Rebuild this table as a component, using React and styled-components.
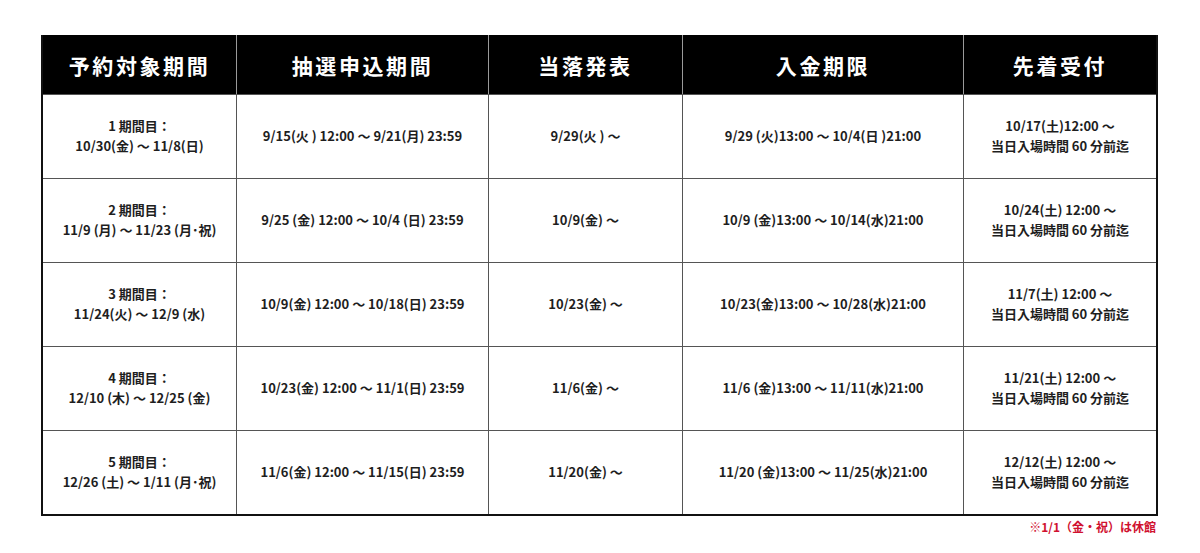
import React from "react"
import styled, { createGlobalStyle } from "styled-components"

const GlobalStyle = createGlobalStyle`
  html, body {
    margin: 0;
    padding: 0;
    background: #fff;
  }
  body {
    font-family: "Noto Sans CJK JP", "Noto Sans", sans-serif;
  }
`

const Page = styled.div`
  width: 1200px;
  height: 553px;
  padding: 35px 0 0 41px;
  box-sizing: border-box;
`

const Wrap = styled.div`
  width: 1117px;
`

const Table = styled.div`
  display: grid;
  grid-template-columns: 193px 252px 194px 281px 193px;
  grid-template-rows: 59px repeat(5, 84px);
  border: 2px solid #111;
  border-top: 0;
  box-sizing: border-box;
`

const HeadCell = styled.div`
  background: #000;
  color: #fff;
  font-size: 21px;
  font-weight: 700;
  letter-spacing: 2.6px;
  display: flex;
  align-items: center;
  justify-content: center;
  border-left: ${p => (p.$first ? "0" : "1px solid #9a9a9a")};
  box-sizing: border-box;
`

const Cell = styled.div`
  display: flex;
  flex-direction: column;
  align-items: center;
  justify-content: center;
  border-top: 1px solid #555;
  border-left: ${p => (p.$first ? "0" : "1px solid #555")};
  box-sizing: border-box;
  color: #1e1e1e;
  font-size: 13px;
  font-weight: 700;
  line-height: 20px;
  white-space: pre;
  padding-bottom: 2px;
`

const Note = styled.div`
  text-align: right;
  color: #d0112f;
  font-size: 12px;
  font-weight: 700;
  margin-top: 2px;
  padding-right: 2px;
`

const heads = ["予約対象期間", "抽選申込期間", "当落発表", "入金期限", "先着受付"]

const rows = [
  [
    ["1 期間目：", "10/30(金) 〜 11/8(日)"],
    ["9/15(火 ) 12:00 〜 9/21(月) 23:59"],
    ["9/29(火 ) 〜"],
    ["9/29 (火)13:00 〜 10/4(日 )21:00"],
    ["10/17(土)12:00 〜", "当日入場時間 60 分前迄"],
  ],
  [
    ["2 期間目：", "11/9 (月) 〜 11/23 (月･祝)"],
    ["9/25 (金) 12:00 〜 10/4 (日) 23:59"],
    ["10/9(金) 〜"],
    ["10/9 (金)13:00 〜 10/14(水)21:00"],
    ["10/24(土) 12:00 〜", "当日入場時間 60 分前迄"],
  ],
  [
    ["3 期間目：", "11/24(火) 〜 12/9 (水)"],
    ["10/9(金) 12:00 〜 10/18(日) 23:59"],
    ["10/23(金) 〜"],
    ["10/23(金)13:00 〜 10/28(水)21:00"],
    ["11/7(土) 12:00 〜", "当日入場時間 60 分前迄"],
  ],
  [
    ["4 期間目：", "12/10 (木) 〜 12/25 (金)"],
    ["10/23(金) 12:00 〜 11/1(日) 23:59"],
    ["11/6(金) 〜"],
    ["11/6 (金)13:00 〜 11/11(水)21:00"],
    ["11/21(土) 12:00 〜", "当日入場時間 60 分前迄"],
  ],
  [
    ["5 期間目：", "12/26 (土) 〜 1/11 (月･祝)"],
    ["11/6(金) 12:00 〜 11/15(日) 23:59"],
    ["11/20(金) 〜"],
    ["11/20 (金)13:00 〜 11/25(水)21:00"],
    ["12/12(土) 12:00 〜", "当日入場時間 60 分前迄"],
  ],
]

const App = () => (
  <Page>
    <GlobalStyle />
    <Wrap>
      <Table>
        {heads.map((h, i) => (
          <HeadCell key={h} $first={i === 0}>{h}</HeadCell>
        ))}
        {rows.map((row, r) =>
          row.map((lines, c) => (
            <Cell key={`${r}-${c}`} $first={c === 0}>
              {lines.map(l => (
                <span key={l}>{l}</span>
              ))}
            </Cell>
          ))
        )}
      </Table>
      <Note>※1/1（金・祝）は休館</Note>
    </Wrap>
  </Page>
)

export default App
